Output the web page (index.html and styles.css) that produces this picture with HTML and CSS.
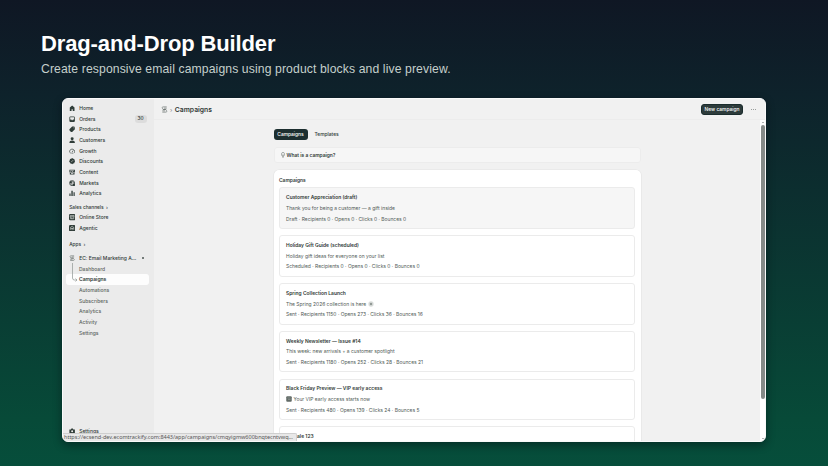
FILE: index.html
```html
<!DOCTYPE html>
<html lang="en">
<head>
<meta charset="utf-8">
<title>Drag-and-Drop Builder</title>
<link rel="stylesheet" href="styles.css">
</head>
<body>
<header class="hero">
  <h1>Drag-and-Drop Builder</h1>
  <p>Create responsive email campaigns using product blocks and live preview.</p>
</header>
<div class="window">
  <aside class="sidebar">
    <nav>
      <a class="item"><svg class="ic" viewBox="0 0 16 16"><path d="M8 1 2 6.500V15h4.500v-4h3v4H14V6.500z"/></svg>Home</a>
      <a class="item"><svg class="ic" viewBox="0 0 16 16"><path fill-rule="evenodd" d="M4 1h8a3 3 0 0 1 3 3v8a3 3 0 0 1-3 3H4a3 3 0 0 1-3-3V4a3 3 0 0 1 3-3zm-1 2v6h3l1 2h2l1-2h3V3z"/></svg>Orders<span class="badge">30</span></a>
      <a class="item"><svg class="ic" viewBox="0 0 16 16"><path fill-rule="evenodd" d="M8 1h5l2 2v5l-7 7H5l-4-4V8zm3.500 2.500v2h2v-2z"/></svg>Products</a>
      <a class="item"><svg class="ic" viewBox="0 0 16 16"><circle cx="8" cy="4.500" r="3.800"/><path d="M1 15c0-4 3-6 7-6s7 2 7 6z"/></svg>Customers</a>
      <a class="item"><svg class="ic line" viewBox="0 0 16 16"><path d="M4 13c-5-3-2-10 4-10s9 7 4 10M8 10l3-4M6 13h4"/></svg>Growth</a>
      <a class="item"><svg class="ic" viewBox="0 0 16 16"><path d="m8 0 2.500 2 3 .5.5 3L16 8l-2 2.500-.5 3-3 .5L8 16l-2.500-2-3-.5-.5-3L0 8l2-2.500.5-3 3-.5z"/><path class="cut" d="m5.500 10.500 5-5"/></svg>Discounts</a>
      <a class="item"><svg class="ic" viewBox="0 0 16 16"><path fill-rule="evenodd" d="M1 2h14v7H1zm2 2v3l3-2 3 2 4-3zM2 10h12v4H2zm3 1v2h6v-2z"/></svg>Content</a>
      <a class="item"><svg class="ic line" viewBox="0 0 16 16"><circle cx="8" cy="8" r="6.500"/><path d="M3 3c5 0 6 2 3 5s1 4 1 6M10 2c-1 4 1 4 4 5"/><path class="solid" d="M9 9h6v6H9zM2 4h5v4H2z"/></svg>Markets</a>
      <a class="item"><svg class="ic" viewBox="0 0 16 16"><path d="M1 9h3v6H1zM6 2h3.500v13H6zM11.500 6h3v9h-3z"/></svg>Analytics</a>
    </nav>
    <div class="group sales">Sales channels <span>›</span></div>
    <nav>
      <a class="item"><svg class="ic" viewBox="0 0 16 16"><rect width="16" height="16" rx="3"/><path class="cut" d="M3 4h10v3H3zM4 8v4h8V8M7 12V9"/></svg>Online Store</a>
      <a class="item"><svg class="ic" viewBox="0 0 16 16"><rect width="16" height="16" rx="3"/><path class="cut" d="M4 12V6l4-3 4 3v6M8 7v6M5 9h6"/></svg>Agentic</a>
    </nav>
    <div class="group apps">Apps <span>›</span></div>
    <nav class="app">
      <a class="item"><svg class="ic brand" viewBox="0 0 16 16"><path d="M13 2H5a2 2 0 0 0-2 3l3 3h6M3 14h8a2 2 0 0 0 2-3l-3-3H4M3 11h6M7 5h6"/></svg>EC: Email Marketing A…<i class="pin"></i></a>
      <a class="item sub">Dashboard</a>
      <a class="item sub active">Campaigns</a>
      <a class="item sub">Automations</a>
      <a class="item sub">Subscribers</a>
      <a class="item sub">Analytics</a>
      <a class="item sub">Activity</a>
      <a class="item sub">Settings</a>
      <svg class="branch" viewBox="0 0 6 19"><path d="M.5 0v15q0 2 2 2H5M3.500 15.500 5 17l-1.500 1.500"/></svg>
    </nav>
    <a class="item bottom"><svg class="ic" viewBox="0 0 16 16"><path fill-rule="evenodd" d="M6 1h4l1 3h4v10H1V4h4zm2 5a2.500 2.500 0 1 0 0 5 2.500 2.500 0 0 0 0-5z"/></svg>Settings</a>
  </aside>
  <div class="main">
    <div class="topbar">
      <svg class="logo" viewBox="0 0 16 16"><path d="M13 2H5a2 2 0 0 0-2 3l3 3h6M3 14h8a2 2 0 0 0 2-3l-3-3H4M3 11h6M7 5h6"/></svg>
      <span class="chev">›</span>
      <h2>Campaigns</h2>
      <button class="new">New campaign</button>
      <span class="more"><i></i><i></i><i></i></span>
    </div>
    <div class="body">
      <div class="content">
        <div class="tabs"><span class="tab on">Campaigns</span><span class="tab">Templates</span></div>
        <div class="info"><svg viewBox="0 0 10 16"><path d="M3 11C0 8 0 1 5 1s5 7 2 10zM3 13h4M4 15h2M5 11V6"/></svg>What is a campaign?</div>
        <section class="panel">
          <h3>Campaigns</h3>
          <article class="card hover"><h4>Customer Appreciation (draft)</h4><p>Thank you for being a customer — a gift inside</p><p>Draft · Recipients 0 · Opens 0 · Clicks 0 · Bounces 0</p></article>
          <article class="card"><h4>Holiday Gift Guide (scheduled)</h4><p>Holiday gift ideas for everyone on your list</p><p>Scheduled · Recipients 0 · Opens 0 · Clicks 0 · Bounces 0</p></article>
          <article class="card"><h4>Spring Collection Launch</h4><p>The Spring 2026 collection is here <svg class="emoji" viewBox="0 0 12 12"><circle cx="6" cy="6" r="5.300" fill="#d9dcda"/><circle cx="6" cy="6" r="2.500" fill="#929a96"/></svg></p><p>Sent · Recipients 1150 · Opens 273 · Clicks 36 · Bounces 16</p></article>
          <article class="card"><h4>Weekly Newsletter — Issue #14</h4><p>This week: new arrivals + a customer spotlight</p><p>Sent · Recipients 1180 · Opens 252 · Clicks 28 · Bounces 21</p></article>
          <article class="card"><h4>Black Friday Preview — VIP early access</h4><p><svg class="emoji lead" viewBox="0 0 12 12"><rect x=".5" y=".5" width="11" height="11" rx="2" fill="#626b67"/><path d="M3 4h6M4 7h5" stroke="#a5aca8"/></svg>Your VIP early access starts now</p><p>Sent · Recipients 480 · Opens 139 · Clicks 24 · Bounces 5</p></article>
          <article class="card last"><h4>ale 123</h4></article>
        </section>
      </div>
      <div class="scroll"><i class="up"></i><i class="thumb"></i><i class="down"></i></div>
    </div>
  </div>
  <div class="status">https://ecsend-dev.ecomtrackify.com:8443/app/campaigns/cmqyigmw600bnqtecntvwq…</div>
</div>
</body>
</html>
```
FILE: styles.css
```css
* { box-sizing: border-box; }
body {
  margin: 0;
  width: 828px;
  height: 466px;
  overflow: hidden;
  background: linear-gradient(180deg, #0f1724 0%, #0e222b 20%, #074a38 90%, #064e3b 100%);
  font-family: "Liberation Sans", Arial, sans-serif;
}
h1, h2, h3, h4, p { margin: 0; }
.hero { height: 98px; padding: 31px 0 0 41px; }
.hero h1 { font-size: 22px; line-height: 26px; letter-spacing: -.13px; color: #fff; white-space: nowrap; }
.hero p { margin-top: 5px; font-size: 12.200px; line-height: 15px; letter-spacing: .11px; color: #c5d0cc; white-space: nowrap; }

.window {
  position: relative;
  display: flex;
  width: 704px;
  height: 343.500px;
  margin-left: 62px;
  overflow: hidden;
  border: 1px solid #fafafa;
  border-radius: 6px;
  background: #f1f1f1;
  box-shadow: 0 3px 9px rgba(0, 8, 16, .45);
  font-family: Inter, "Liberation Sans", sans-serif;
  font-size: 5px;
  color: #303936;
}
.sidebar { display: flex; flex-direction: column; width: 90.500px; padding: 3.900px 5px 0 3px; background: #ebebeb; }
.item {
  display: flex;
  align-items: center;
  height: 10.650px;
  padding-left: 3px;
  border-radius: 3px;
  font-weight: 550;
  white-space: nowrap;
}
.ic { width: 6.300px; height: 6.300px; margin-right: 3.900px; fill: #303d39; flex: none; }
.ic.line { fill: none; stroke: #303d39; stroke-width: 1.800; }
.ic .solid { fill: #303d39; stroke: none; }
.ic .cut { fill: none; stroke: #dfe3e1; stroke-width: 1.500; }
.brand, .logo { fill: none; stroke: #59635f; stroke-width: 1.400; }
.ic.brand { fill: none; }
.badge { margin-left: auto; margin-right: 2px; width: 12px; height: 7.500px; border-radius: 3px; background: #dcdcdc; font-size: 4.800px; line-height: 7.500px; text-align: center; font-weight: 500; }
.group { padding-left: 3.200px; height: 10px; line-height: 10px; font-weight: 500; font-size: 4.800px; }
.group span { margin-left: 1px; }
.sales { margin-top: 3.400px; }
.apps { margin-top: 5.500px; }
.app { position: relative; margin-top: 4px; }
.sub { padding-left: 13px; font-weight: 450; color: #5c6461; }
.sub.active { background: #fdfdfd; font-weight: 600; color: #303936; }
.pin { width: 2px; height: 2px; margin: 0 5px 0 auto; border-radius: 1px; background: #4d5653; }
.branch { position: absolute; left: 6px; top: 10px; width: 6px; height: 19px; fill: none; stroke: #9ba19e; stroke-width: .8; }
.bottom { margin-top: auto; margin-bottom: 4px; }

.main { flex: 1; display: flex; flex-direction: column; min-width: 0; }
.topbar { display: flex; align-items: center; height: 21px; flex: none; padding: 1px 9.500px 0 7px; border-bottom: 1px solid #ececec; }
.logo { width: 7px; height: 7px; }
.chev { margin: 0 2.500px 1px; font-size: 6px; color: #7a817e; }
.topbar h2 { font-size: 6.800px; line-height: 10px; font-weight: 600; }
.new { margin: 0 7.500px 0 auto; width: 42px; height: 11px; padding: 0; border: 1px solid #1b2c2d; border-radius: 3px; background: #2d3b3b; color: #fff; font: 550 4.900px/9px Inter, sans-serif; white-space: nowrap; }
.more { display: flex; gap: 1px; }
.more i { width: 1px; height: 1px; border-radius: 50%; background: #7c8380; }
.body { flex: 1; display: flex; min-height: 0; overflow: hidden; }
.content { width: 367px; margin-left: 120px; padding-top: 8.600px; }
.tabs { display: flex; gap: 1px; }
.tab { height: 11px; padding: 0 6px; line-height: 11px; font-size: 4.900px; font-weight: 500; }
.tab.on { width: 34px; padding: 0; border-radius: 3px; background: #1d2f30; color: #fff; text-align: center; font-weight: 550; }
.info { display: flex; align-items: center; height: 16px; margin-top: 7.200px; padding-left: 6px; border: 1px solid #ececec; border-radius: 3px; background: #f6f6f6; font-size: 4.900px; font-weight: 600; }
.info svg { width: 4px; height: 6px; margin-right: 2px; fill: none; stroke: #59635f; stroke-width: 1.300; }
.panel { margin-top: 7.500px; padding: 6px 6px 6px 5.500px; height: 400px; border-radius: 5px; background: #fff; box-shadow: 0 0 0 .6px #e4e4e4; }
.panel h3 { height: 11.200px; font-size: 4.900px; line-height: 9px; font-weight: 600; }
.card { height: 41.600px; margin-bottom: 6.200px; padding: 3.900px 6px; border: 1px solid #ebebeb; border-radius: 3px; }
.card.hover { background: #f6f6f6; }
.card h4, .card p { height: 10.650px; font-size: 4.950px; line-height: 10.650px; white-space: nowrap; }
.card h4 { font-weight: 620; }
.card p { color: #515a56; font-weight: 400; }
.card.last { height: 20px; padding-left: 17px; }
.emoji { width: 6px; height: 6px; vertical-align: -1.200px; fill: none; }
.emoji.lead { margin-right: 1.500px; }
.scroll { display: flex; flex-direction: column; align-items: center; width: 5px; margin-left: auto; background: #fff; }
.up, .down { width: 0; height: 0; border: 1.500px solid transparent; }
.up { margin-top: .5px; border-bottom-color: #606664; }
.down { margin-top: auto; margin-bottom: 1px; border-top-color: #606664; }
.thumb { width: 4px; height: 274px; margin-top: 2px; border-radius: 2px; background: #858a88; }
.status { position: absolute; left: 0; bottom: 0; width: 233.500px; height: 7.800px; padding-left: 1px; border: 0 solid #cfcfcf; border-width: .8px .8px 0 0; border-radius: 0 2px 0 0; background: #e8e8e8; color: #555; font: 5.500px/7.300px "Noto Sans", "Open Sans", sans-serif; white-space: nowrap; }
```
